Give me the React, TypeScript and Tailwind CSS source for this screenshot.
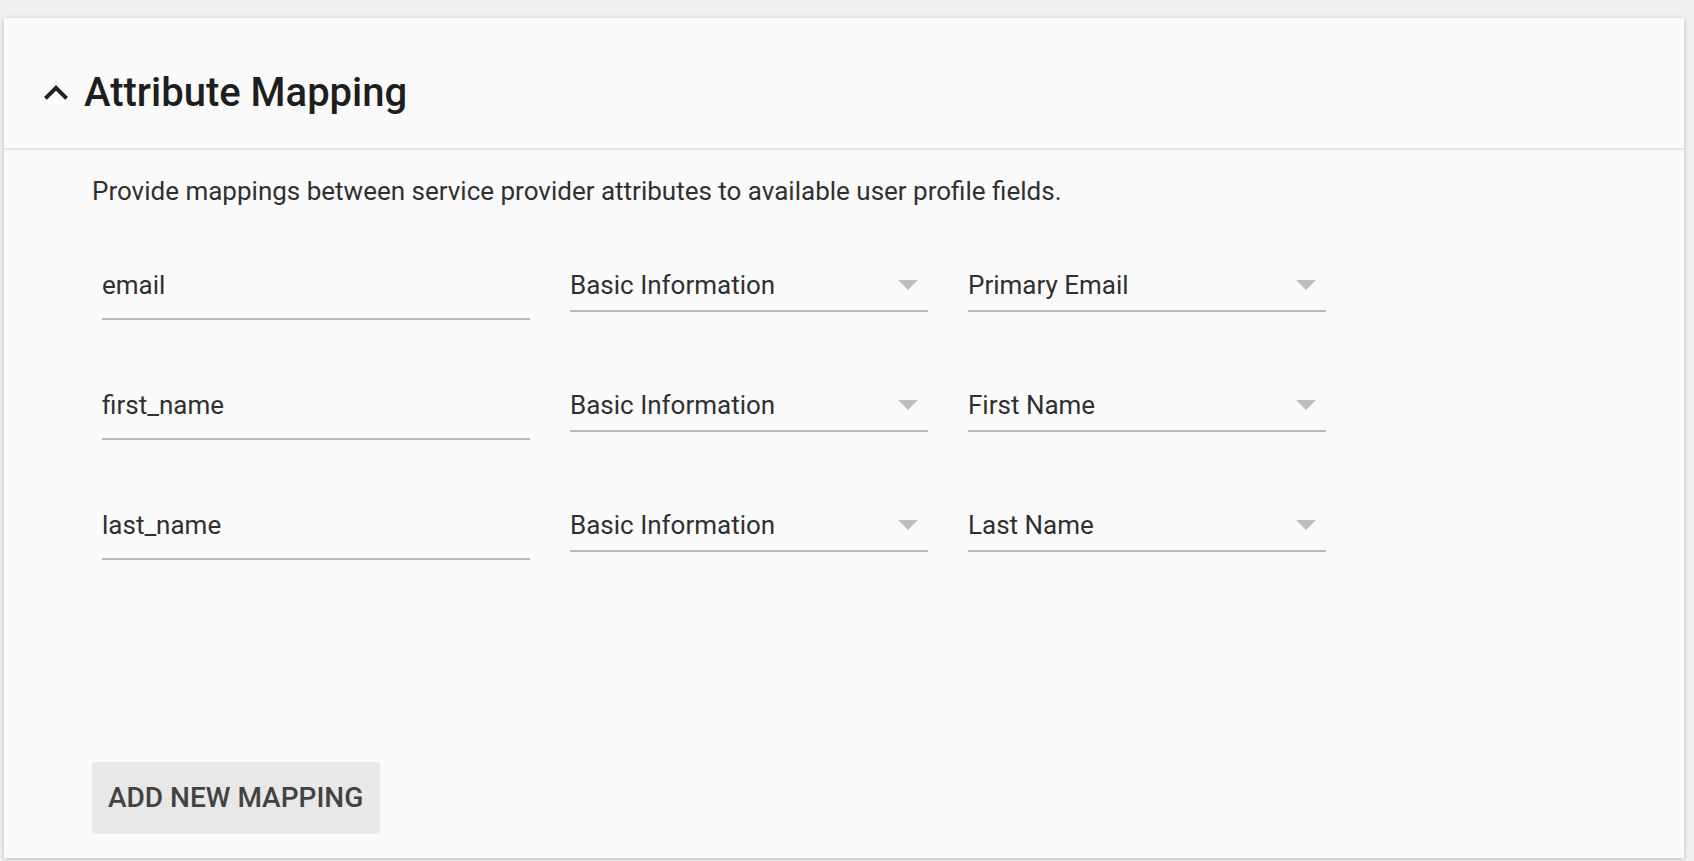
import React from "react";

const font = { fontFamily: "Roboto, 'Noto Sans', Arial, sans-serif" };

function Arrow() {
  return (
    <svg width="20" height="10" viewBox="0 0 20 10" className="absolute right-[10px] top-[11px]">
      <path d="M0 0 L20 0 L10 10 Z" fill="#bdbdbd" />
    </svg>
  );
}

function TextField({ value }: { value: string }) {
  return (
    <div className="w-[428px] h-[51px] pt-[1px] border-b-2 border-[#b8b8b8] text-[26px] leading-[30px] text-[#303030]">
      {value}
    </div>
  );
}

function SelectField({ value }: { value: string }) {
  return (
    <div className="relative w-[358px] h-[43px] pt-[1px] border-b-2 border-[#b8b8b8] text-[26px] leading-[30px] text-[#303030]">
      {value}
      <Arrow />
    </div>
  );
}

const rows = [
  { attr: "email", group: "Basic Information", field: "Primary Email" },
  { attr: "first_name", group: "Basic Information", field: "First Name" },
  { attr: "last_name", group: "Basic Information", field: "Last Name" },
];

export default function App() {
  return (
    <div className="w-full h-screen bg-[#f0f0f0] pt-[18px] pl-[4px] overflow-hidden" style={font}>
      <div className="w-[1680px] h-[840px] bg-[#fafafa] shadow-[0_1px_5px_rgba(0,0,0,0.22)] flex flex-col">
        <div className="h-[132px] shrink-0 border-b-2 border-[#e6e6e6] flex items-start pl-[28px] pt-[51px]">
          <div className="flex items-center h-[47px]">
            <svg width="48" height="48" viewBox="0 0 24 24" className="shrink-0">
              <path d="M12 8l-6 6 1.41 1.41L12 10.83l4.59 4.58L18 14z" fill="#212121" />
            </svg>
            <h2 className="ml-[4px] text-[40px] leading-[47px] font-medium text-[#1e1e1e]">Attribute Mapping</h2>
          </div>
        </div>
        <div className="pl-[88px] pt-[26px]">
          <p className="text-[26px] leading-[30px] text-[#303030]">
            Provide mappings between service provider attributes to available user profile fields.
          </p>
          <div className="mt-[63px] pl-[10px] flex flex-col gap-[69px]">
            {rows.map((r) => (
              <div key={r.attr} className="flex items-start gap-[40px]">
                <TextField value={r.attr} />
                <SelectField value={r.group} />
                <SelectField value={r.field} />
              </div>
            ))}
          </div>
          <button className="mt-[202px] w-[288px] h-[72px] rounded-[3px] bg-[#e8e8e8] text-[28px] font-medium text-[#424242] text-left pl-[16px]">
            ADD NEW MAPPING
          </button>
        </div>
      </div>
    </div>
  );
}
